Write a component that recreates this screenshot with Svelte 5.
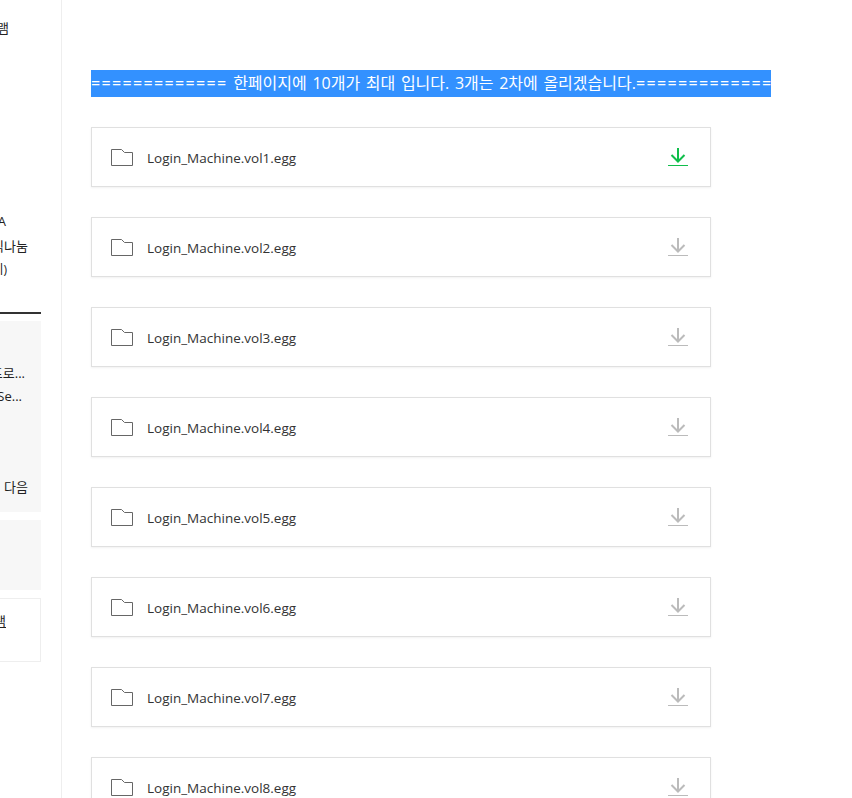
<script>
    const files = [1, 2, 3, 4, 5, 6, 7, 8];
</script>

<div class="page">
    <aside class="side">
        <div class="side-inner">
            <p class="line top">프로그램</p>
            <p class="line a">RNA</p>
            <p class="line b">지식나눔</p>
            <p class="line c">(전체보기)</p>
            <div class="rule"></div>
            <div class="box big">
                <p class="line d">프로...</p>
                <p class="line e">Se...</p>
                <p class="line f">다음</p>
            </div>
            <div class="box small"></div>
            <div class="outlined">
                <p class="line g"><u>프로그램</u></p>
            </div>
        </div>
    </aside>

    <main class="main">
        <div class="banner"><span class="eq">=============</span> 한페이지에 10개가 최대 입니다. 3개는 2차에 올리겠습니다.<span class="eq">=============</span></div>
        <ul class="list">
            {#each files as n}
                <li class="card">
                    <svg class="folder" width="22" height="17" viewBox="0 0 22 17" fill="none">
                        <path d="M.5 16.5V.5h10l3 3h8v13z" stroke="#666" />
                    </svg>
                    <span class="name">Login_Machine.vol{n}.egg</span>
                    <svg class="down" class:active={n === 1} width="20" height="18" viewBox="0 0 20 18" fill="none">
                        <path d="M10 0v13M3.500 7l6.500 6.500L16.500 7" stroke="currentColor" stroke-width="2" />
                        <path d="M0 17.500h20" stroke="currentColor" />
                    </svg>
                </li>
            {/each}
        </ul>
    </main>
</div>

<style>
    :global(body) {
        margin: 0;
        background: #fff;
        overflow: hidden;
    }
    .page {
        display: flex;
        height: 798px;
        overflow: hidden;
        font-family: "Open Sans", "Noto Sans CJK KR", sans-serif;
        color: #222;
    }
    .side {
        width: 61px;
        flex: none;
        border-right: 1px solid #eee;
        overflow: hidden;
        display: flex;
        justify-content: flex-end;
    }
    .side-inner {
        width: 200px;
        flex: none;
        margin-right: 20px;
        font-size: 13px;
    }
    .line {
        margin: 0;
        text-align: right;
        white-space: nowrap;
        line-height: 18px;
    }
    .top {
        padding-top: 19px;
        padding-right: 32px;
    }
    .a {
        margin-top: 175px;
        padding-right: 35px;
    }
    .b {
        margin-top: 7px;
        padding-right: 13px;
    }
    .c {
        margin-top: 6px;
        padding-right: 34px;
        font-size: 12px;
    }
    .rule {
        height: 2px;
        margin-top: 33px;
        background: #333;
    }
    .box {
        background: #f7f7f7;
    }
    .big {
        height: 191px;
        margin-top: 7px;
        padding-top: 43px;
        box-sizing: border-box;
    }
    .d {
        padding-right: 16px;
    }
    .e {
        margin-top: 5px;
        padding-right: 19px;
    }
    .f {
        margin-top: 73px;
        padding-right: 13px;
    }
    .small {
        height: 70px;
        margin-top: 8px;
    }
    .outlined {
        height: 64px;
        margin-top: 8px;
        border: 1px solid #eee;
        box-sizing: border-box;
        padding-top: 13px;
    }
    .g {
        padding-right: 34px;
    }
    .main {
        flex: 1;
        padding: 70px 0 0 29px;
    }
    .banner {
        width: 680px;
        height: 27px;
        background: #3391ff;
        color: #fff;
        font-size: 16px;
        line-height: 27px;
        word-spacing: 1.5px;
        white-space: nowrap;
        overflow: hidden;
    }
    .eq {
        letter-spacing: 1.35px;
    }
    .list {
        list-style: none;
        margin: 30px 0 0;
        padding: 0;
        display: flex;
        flex-direction: column;
        gap: 30px;
    }
    .card {
        width: 620px;
        height: 60px;
        flex: none;
        box-sizing: border-box;
        display: flex;
        align-items: center;
        padding: 0 22px 0 19px;
        border: 1px solid #e0e0e0;
        box-shadow: 0 1px 2px rgba(0, 0, 0, 0.06);
    }
    .folder {
        flex: none;
    }
    .name {
        margin-left: 14px;
        padding-top: 1px;
        font-size: 13.5px;
        color: #333;
    }
    .down {
        margin-left: auto;
        color: #bbb;
    }
    .down.active {
        color: #10be4b;
    }
</style>
